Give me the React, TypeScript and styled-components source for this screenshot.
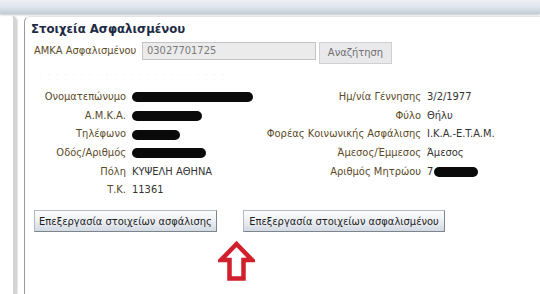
import React from 'react';
import styled, { createGlobalStyle } from 'styled-components';

const GlobalStyle = createGlobalStyle`
  html, body {
    margin: 0;
    padding: 0;
    background: #ffffff;
  }
  body {
    font-family: 'DejaVu Sans Condensed', 'Liberation Sans', Arial, sans-serif;
    font-size: 11px;
    color: #333;
  }
`;

const Page = styled.div`
  width: 540px;
  height: 294px;
  overflow: hidden;
  display: flex;
  flex-direction: column;
`;

const TopBar = styled.div`
  height: 14px;
  flex: none;
  background: linear-gradient(#edf1f5 0%, #dfe5ec 50%, #c3cbd3 100%);
  box-shadow: 0 1px 2px rgba(120, 130, 140, 0.45);
`;

const Body = styled.div`
  flex: 1;
  display: flex;
  gap: 7px;
  padding-top: 2px;
`;

const SideStrip = styled.div`
  width: 13px;
  flex: none;
  border-right: 4px solid #d4d4d4;
  border-top-right-radius: 5px;
  box-shadow: 1px 0 1px #e6e6e6;
`;

const Panel = styled.div`
  flex: 1;
  border-left: 1px solid #9a9a9a;
  border-top: 1px solid #e4e4e4;
  border-top-left-radius: 6px;
  padding: 4px 0 0 6px;
  display: flex;
  flex-direction: column;
`;

const Title = styled.div`
  font-weight: bold;
  font-size: 13px;
  color: #1d2b45;
  height: 16px;
  line-height: 16px;
  white-space: nowrap;
`;

const SearchRow = styled.div`
  display: flex;
  align-items: flex-start;
  margin-top: 5px;
  padding-left: 3px;
`;

const Label = styled.span`
  color: #5b4a1f;
  white-space: nowrap;
`;

const SearchLabel = styled(Label)`
  width: 108px;
  line-height: 17px;
`;

const Input = styled.div`
  width: 168px;
  height: 16px;
  line-height: 16px;
  background: #ebebeb;
  border: 1px solid #c4c4c4;
  color: #7a7a7a;
  padding-left: 4px;
  box-sizing: content-box;
`;

const SearchButton = styled.div`
  margin-left: 3px;
  width: 71px;
  height: 20px;
  line-height: 20px;
  text-align: center;
  color: #6e6e6e;
  background: #e9e9ec;
  border: 1px solid #d0d0d4;
  white-space: nowrap;
`;

const GhostRow = styled.div`
  height: 18px;
  line-height: 18px;
  margin-top: 2px;
  padding-left: 8px;
  color: #f2f2ea;
  letter-spacing: 1px;
  white-space: nowrap;
`;

const Grid = styled.div`
  display: grid;
  grid-template-columns: 95px 125px 158px auto;
  column-gap: 6px;
  grid-auto-rows: 18.7px;
  line-height: 18.7px;
  margin-top: 4px;
`;

const Key = styled(Label)`
  text-align: right;
`;

const Value = styled.span`
  color: #333;
  white-space: nowrap;
  display: flex;
  align-items: center;
`;

const Redact = styled.span<{ $w: number }>`
  display: inline-block;
  width: ${({ $w }) => $w}px;
  height: 10px;
  background: #0a0a0a;
  border-radius: 5px;
`;

const Actions = styled.div`
  display: flex;
  gap: 26px;
  margin-top: 10px;
  padding-left: 3px;
`;

const ActionButton = styled.div<{ $w: number }>`
  width: ${({ $w }) => $w}px;
  height: 22px;
  line-height: 21px;
  text-align: center;
  color: #1e1e1e;
  white-space: nowrap;
  background: linear-gradient(#fbfcfd 0%, #eef1f5 45%, #d3dae3 100%);
  border: 1px solid #b3b9c1;
  border-right-color: #7d848c;
  border-bottom-color: #7d848c;
  box-sizing: border-box;
`;

const ArrowWrap = styled.div`
  display: flex;
  padding-left: 187px;
  margin-top: 9px;
`;

const UpArrow = () => (
  <svg width="37" height="40" viewBox="0 0 37 40">
    <path
      d="M18.5 3 L3 19 L11.5 19 L11.5 37.5 L25.5 37.5 L25.5 19 L34 19 Z"
      fill="#fff"
      stroke="#d11f2b"
      strokeWidth="4.5"
      strokeLinejoin="miter"
    />
  </svg>
);

type Row = [string, React.ReactNode, string, React.ReactNode];

const rows: Row[] = [
  ['Ονοματεπώνυμο', <Redact $w={121} />, 'Ημ/νία Γέννησης', '3/2/1977'],
  ['Α.Μ.Κ.Α.', <Redact $w={70} />, 'Φύλο', 'Θήλυ'],
  ['Τηλέφωνο', <Redact $w={48} />, 'Φορέας Κοινωνικής Ασφάλισης', 'I.K.A.-E.T.A.M.'],
  ['Οδός/Αριθμός', <Redact $w={74} />, 'Άμεσος/Έμμεσος', 'Άμεσος'],
  [
    'Πόλη',
    'ΚΥΨΕΛΗ ΑΘΗΝΑ',
    'Αριθμός Μητρώου',
    <>
      7<Redact $w={44} style={{ marginLeft: 1 }} />
    </>,
  ],
  ['Τ.Κ.', '11361', '', ''],
];

export default function App() {
  return (
    <>
      <GlobalStyle />
      <Page>
        <TopBar />
        <Body>
          <SideStrip />
          <Panel>
            <Title>Στοιχεία Ασφαλισμένου</Title>
            <SearchRow>
              <SearchLabel>ΑΜΚΑ Ασφαλισμένου</SearchLabel>
              <Input>03027701725</Input>
              <SearchButton>Αναζήτηση</SearchButton>
            </SearchRow>
            <GhostRow>· · · · · · · · · · · · · · · · · · · · · · ·</GhostRow>
            <Grid>
              {rows.map((r, i) => (
                <React.Fragment key={i}>
                  <Key>{r[0]}</Key>
                  <Value>{r[1]}</Value>
                  <Key>{r[2]}</Key>
                  <Value>{r[3]}</Value>
                </React.Fragment>
              ))}
            </Grid>
            <Actions>
              <ActionButton $w={183}>Επεξεργασία στοιχείων ασφάλισης</ActionButton>
              <ActionButton $w={202}>Επεξεργασία στοιχείων ασφαλισμένου</ActionButton>
            </Actions>
            <ArrowWrap>
              <UpArrow />
            </ArrowWrap>
          </Panel>
        </Body>
      </Page>
    </>
  );
}
